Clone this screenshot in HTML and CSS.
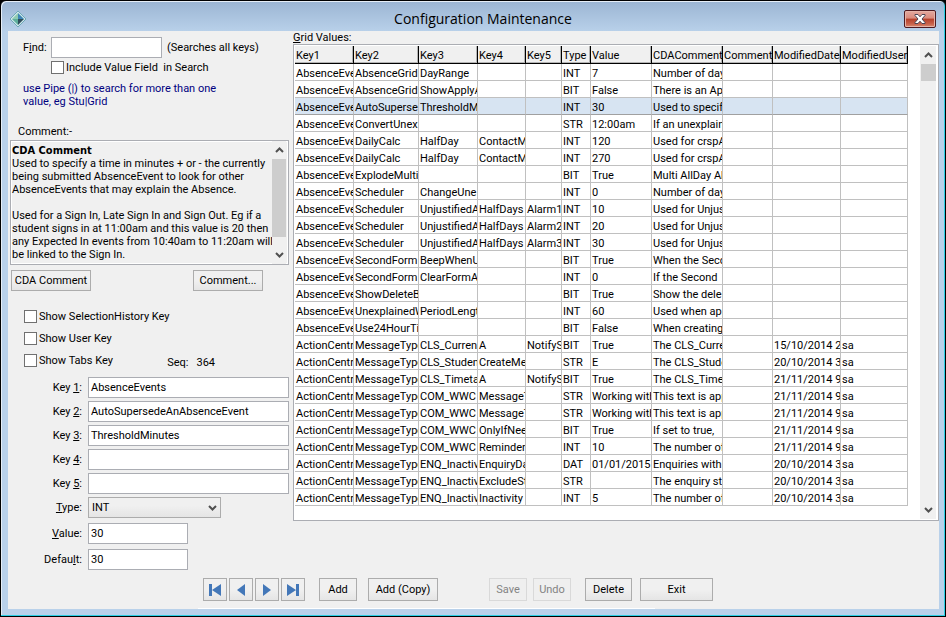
FILE: index.html
```html
<!DOCTYPE html>
<html lang="en">
<head>
<meta charset="utf-8">
<title>Configuration Maintenance</title>
<link rel="stylesheet" href="styles.css">
</head>
<body>
<div class="window">
  <header class="titlebar">
    <svg class="app-icon" width="18" height="18" viewBox="0 0 18 18" aria-hidden="true">
      <path d="M9 1 17 9 9 17 1 9Z" fill="#cfe6ea" stroke="#6fa9b8"/>
      <path d="M9 3 9 9 3 9Z" fill="#8fcbb0"/>
      <path d="M9 3 15 9 9 9Z" fill="#3f86b4"/>
      <path d="M3 9 9 9 9 15Z" fill="#5fae9c"/>
      <path d="M15 9 9 15 9 9Z" fill="#2f4f5c"/>
    </svg>
    <h1 class="title">Configuration Maintenance</h1>
    <button class="close" type="button" aria-label="Close">
      <svg width="12" height="10" viewBox="0 0 12 10" aria-hidden="true">
        <path d="M1 .5h3l2 2.3 2-2.3h3v1L8 5l3 3.500v1H8L6 7.200 4 9.500H1v-1L4 5 1 1.500Z" fill="#fff" stroke="#4a4656" stroke-width="1"/>
      </svg>
    </button>
  </header>

  <main class="client">
    <div class="columns">
      <form class="side">
        <div class="find">
          <label for="find">F<u>i</u>nd:</label>
          <input class="text" id="find" type="text">
          <span>(Searches all keys)</span>
        </div>
        <label class="check include"><input type="checkbox">Include Value Field&nbsp; in Search</label>
        <p class="hint">use Pipe (|) to search for more than one<br>value, eg Stu|Grid</p>
        <p class="comment-label">Comment:-</p>
        <div class="comment">
          <div class="comment-text"><b>CDA Comment</b>
Used to specify a time in minutes + or - the currently
being submitted AbsenceEvent to look for other
AbsenceEvents that may explain the Absence.

Used for a Sign In, Late Sign In and Sign Out. Eg if a
student signs in at 11:00am and this value is 20 then
any Expected In events from 10:40am to 11:20am will
be linked to the Sign In.</div>
          <div class="scroll comment-scroll">
            <svg class="arrow" width="9" height="6" viewBox="0 0 9 6"><path d="M1 5 4.500 1.500 8 5" /></svg>
            <div class="thumb"></div>
            <svg class="arrow" width="9" height="6" viewBox="0 0 9 6"><path d="M1 1 4.500 4.500 8 1" /></svg>
          </div>
        </div>
        <div class="comment-buttons">
          <button class="btn" type="button">CDA Comment</button>
          <button class="btn" type="button">Comment...</button>
        </div>
        <div class="options">
          <label class="check"><input type="checkbox">Show SelectionHistory Key</label>
          <label class="check"><input type="checkbox">Show User Key</label>
          <div class="tabs-line">
            <label class="check"><input type="checkbox">Show Tabs Key</label>
            <span class="seq"><span>Seq:</span><span>364</span></span>
          </div>
        </div>
        <div class="fields keys">
          <label for="k1">Key <u>1</u>:</label><input class="text" id="k1" type="text" value="AbsenceEvents">
          <label for="k2">Key <u>2</u>:</label><input class="text" id="k2" type="text" value="AutoSupersedeAnAbsenceEvent">
          <label for="k3">Key <u>3</u>:</label><input class="text" id="k3" type="text" value="ThresholdMinutes">
          <label for="k4">Key <u>4</u>:</label><input class="text" id="k4" type="text">
          <label for="k5">Key <u>5</u>:</label><input class="text" id="k5" type="text">
          <label for="type"><u>T</u>ype:</label>
          <div class="select">
            <select id="type"><option>INT</option><option>BIT</option><option>STR</option><option>DAT</option></select>
            <svg class="arrow" width="9" height="6" viewBox="0 0 9 6"><path d="M1 1 4.500 4.500 8 1" /></svg>
          </div>
        </div>
        <div class="fields values">
          <label for="value"><u>V</u>alue:</label><input class="text short" id="value" type="text" value="30">
          <label for="default">Defau<u>l</u>t:</label><input class="text short" id="default" type="text" value="30">
        </div>
      </form>

      <section class="grid-area">
        <h2 class="grid-label"><u>G</u>rid Values:</h2>
        <div class="grid-box">
          <table class="grid">
            <colgroup>
              <col class="w59"><col class="w65"><col class="w59"><col class="w48"><col class="w36"><col class="w29"><col class="w61"><col class="w71"><col class="w50"><col class="w68"><col class="w67">
            </colgroup>
            <thead>
              <tr><th>Key1</th><th>Key2</th><th>Key3</th><th>Key4</th><th>Key5</th><th>Type</th><th>Value</th><th>CDAComment</th><th>Comment</th><th>ModifiedDate</th><th>ModifiedUser</th></tr>
            </thead>
            <tbody id="rows"></tbody>
          </table>
          <div class="scroll">
            <svg class="arrow" width="9" height="6" viewBox="0 0 9 6"><path d="M1 5 4.500 1.500 8 5" /></svg>
            <div class="thumb"></div>
            <svg class="arrow" width="9" height="6" viewBox="0 0 9 6"><path d="M1 1 4.500 4.500 8 1" /></svg>
          </div>
        </div>
      </section>
    </div>

    <footer class="toolbar">
      <div class="nav">
        <button class="btn" type="button" aria-label="First"><svg width="14" height="12" viewBox="0 0 14 12"><path d="M1 0h3v12H1zM13 0v12L4 6z"/></svg></button>
        <button class="btn" type="button" aria-label="Previous"><svg width="14" height="12" viewBox="0 0 14 12"><path d="M11 0v12L3 6z"/></svg></button>
        <button class="btn" type="button" aria-label="Next"><svg width="14" height="12" viewBox="0 0 14 12"><path d="M3 0v12l8-6z"/></svg></button>
        <button class="btn" type="button" aria-label="Last"><svg width="14" height="12" viewBox="0 0 14 12"><path d="M10 0h3v12h-3zM1 0v12l9-6z"/></svg></button>
      </div>
      <button class="btn add" type="button">Add</button>
      <button class="btn copy" type="button">Add (Copy)</button>
      <button class="btn save" type="button" disabled>Save</button>
      <button class="btn undo" type="button" disabled>Undo</button>
      <button class="btn delete" type="button">Delete</button>
      <button class="btn exit" type="button">Exit</button>
    </footer>
  </main>
</div>
<script src="script.js"></script>
</body>
</html>
```
FILE: styles.css
```css
* { box-sizing: border-box; }

html, body { height: 100%; margin: 0; }

body, button, input, select {
  font-family: Roboto, "DejaVu Sans Condensed", sans-serif;
  font-size: 11px;
  line-height: 13px;
  color: #000;
}

body { background: #000; }

h1, h2, p { margin: 0; font-weight: normal; }

/* window frame */
.window {
  display: flex;
  flex-direction: column;
  min-height: 100vh;
  padding: 0 6px 7px;
  border: 1px solid #000;
  border-radius: 6px 6px 0 0;
  box-shadow: inset -1px -1px 0 #2ccfe4, inset 1px 1px 0 #e6eef7;
  background: linear-gradient(#9bb5d3, #b9d1ea 31px);
}

.titlebar {
  display: grid;
  grid-template-columns: 64px 1fr 44px;
  align-items: center;
  height: 30px;
  padding-top: 6px;
}

.app-icon { margin-left: 2px; }

.title {
  font-family: "Open Sans", "Noto Sans", sans-serif;
  font-size: 14px;
  line-height: 20px;
  text-align: center;
}

.close {
  display: grid;
  place-items: center;
  justify-self: end;
  width: 32px;
  height: 18px;
  margin-right: 3px;
  padding: 0;
  border: 1px solid #4e1a20;
  border-radius: 2px;
  background: linear-gradient(#e3a99f, #d98a7c 45%, #b5402b 50%, #c8614a 80%, #d88a70);
  box-shadow: inset 0 0 0 1px #e5b3a8;
}

.client {
  flex: 1;
  display: flex;
  flex-direction: column;
  margin-left: 1px;
  background: #f0f0f0;
}

.columns { display: flex; gap: 4px; }

/* left pane */
.side { width: 281px; flex: none; padding-left: 2px; }

.text {
  height: 21px;
  padding: 0 2px;
  border: 1px solid #abadb3;
  background: #fff;
}

.find {
  display: grid;
  grid-template-columns: 23px 111px 1fr;
  align-items: center;
  gap: 5px;
  padding: 6px 0 0 13px;
}

.check {
  display: flex;
  align-items: center;
  gap: 2px;
}
.check input {
  appearance: none;
  width: 13px;
  height: 13px;
  margin: 0;
  border: 1px solid #707070;
  background: #fff;
}
.include { margin: 3px 0 0 41px; }

.hint { margin: 8px 0 0 13px; color: #000080; }
.comment-label { margin: 17px 0 0 8px; }

.comment {
  display: flex;
  height: 125px;
  margin-top: 2px;
  border: 1px solid #abadb3;
  box-shadow: inset 0 0 0 1px #fff;
}
.comment-text {
  flex: 1;
  min-width: 0;
  padding: 3px 0 0 1px;
  overflow: hidden;
  white-space: pre;
}
.comment-text b { font-family: "DejaVu Sans Condensed", sans-serif; line-height: 1; }

.scroll {
  display: flex;
  flex-direction: column;
  align-items: center;
  width: 16px;
  background: #f0f0f0;
}
.arrow { fill: none; stroke: #505050; stroke-width: 2; }
.thumb { width: 15px; background: #cdcdcd; }
.scroll .arrow:first-child { margin: 6px 0; }
.scroll .arrow:last-child { margin: auto 0 6px; }
.comment-scroll { flex: none; width: 14px; margin-right: 2px; }
.comment-scroll .thumb { width: 14px; height: 78px; }

.btn {
  display: grid;
  place-items: center;
  height: 23px;
  padding: 0;
  border: 1px solid #acacac;
  background: linear-gradient(#f0f0f0 50%, #e5e5e5);
}
.btn:disabled { color: #838383; border-color: #d9d9d9; background: #efefef; }

.comment-buttons {
  display: flex;
  justify-content: space-between;
  padding: 5px 26px 0 1px;
}
.comment-buttons .btn { width: 70px; height: 21px; }
.comment-buttons .btn:first-child { width: 80px; }

.options {
  display: flex;
  flex-direction: column;
  gap: 9px;
  margin: 19px 0 0 14px;
}
.tabs-line { display: flex; }
.seq { display: flex; gap: 8px; margin: 2px 0 -2px auto; padding-right: 74px; }

.fields {
  display: grid;
  grid-template-columns: 72px 1fr;
  align-items: center;
  column-gap: 6px;
}
.fields label { text-align: right; }
.keys { margin-top: 10px; row-gap: 3px; }
.values { margin-top: 5px; row-gap: 5px; }
.short { width: 100px; }

.select { position: relative; width: 133px; }
.select select {
  display: block;
  width: 100%;
  height: 21px;
  padding: 0 3px;
  appearance: none;
  border: 1px solid #acacac;
  border-radius: 0;
  background: linear-gradient(#f0f0f0 40%, #e5e5e5);
}
.select .arrow { position: absolute; right: 4px; top: 8px; pointer-events: none; }

/* grid */
.grid-area {
  flex: 1;
  min-width: 0;
  display: flex;
  flex-direction: column;
}
.grid-label { font-size: 11px; line-height: 13px; }
.grid-box {
  flex: none;
  display: flex;
  align-items: stretch;
  justify-content: space-between;
  height: 477px;
  border: 1px solid #abadb3;
  background: #fff;
}
.grid-box .scroll { margin: 1px 2px 1px 0; }
.grid-box .thumb { height: 17px; }

.grid {
  align-self: flex-start;
  margin: 1px 0 0 1px;
  width: 613px;
  table-layout: fixed;
  border-spacing: 0;
}
.w59 { width: 59px; }
.w65 { width: 65px; }
.w48 { width: 48px; }
.w36 { width: 36px; }
.w29 { width: 29px; }
.w61 { width: 61px; }
.w71 { width: 71px; }
.w50 { width: 50px; }
.w68 { width: 68px; }
.w67 { width: 67px; }

.grid th, .grid td {
  height: 17px;
  padding: 2px 0 0 1px;
  overflow: hidden;
  font-weight: normal;
  line-height: 13px;
  text-align: left;
  white-space: nowrap;
  border-right: 1px solid #c0c0c0;
  border-bottom: 1px solid #c0c0c0;
}
.grid th {
  height: 18px;
  background: #f0f0f0;
  border-right-color: #000;
  border-bottom-color: #000;
  box-shadow: inset -1px -1px 0 #b4b4b4;
}
.selected td { background: #d7e4f2; border-bottom-color: #a0a0a0; }

/* bottom toolbar */
.toolbar {
  display: flex;
  margin: auto 0 0 190px;
  padding: 0 0 8px 5px;
  background: linear-gradient(#fff, #fff) 0 100% / 457px 1px no-repeat;
}
.nav { display: flex; gap: 2px; }
.nav .btn { width: 24px; }
.nav svg { fill: #4377b8; }
.add { width: 38px; margin-left: 14px; }
.copy { width: 70px; margin-left: 11px; }
.save { width: 38px; margin-left: 51px; }
.undo { width: 38px; margin-left: 6px; }
.delete { width: 47px; margin-left: 14px; }
.exit { width: 73px; margin-left: 8px; }
```
FILE: script.js
```js
// key1 | key2 | key3 | key4 | key5 | type | value | CDA comment | comment | modified date | modified user
const data = `AbsenceEve|AbsenceGrid|DayRange|||INT|7|Number of day|||
AbsenceEve|AbsenceGrid|ShowApplyA|||BIT|False|There is an Ap|||
AbsenceEve|AutoSuperse|ThresholdMi|||INT|30|Used to specif|||
AbsenceEve|ConvertUnex||||STR|12:00am|If an unexplain|||
AbsenceEve|DailyCalc|HalfDay|ContactM||INT|120|Used for crspA|||
AbsenceEve|DailyCalc|HalfDay|ContactM||INT|270|Used for crspA|||
AbsenceEve|ExplodeMultiA||||BIT|True|Multi AllDay Ab|||
AbsenceEve|Scheduler|ChangeUne|||INT|0|Number of day|||
AbsenceEve|Scheduler|UnjustifiedA|HalfDays|Alarm1|INT|10|Used for Unjus|||
AbsenceEve|Scheduler|UnjustifiedA|HalfDays|Alarm2|INT|20|Used for Unjus|||
AbsenceEve|Scheduler|UnjustifiedA|HalfDays|Alarm3|INT|30|Used for Unjus|||
AbsenceEve|SecondForm|BeepWhenU|||BIT|True|When the Seco|||
AbsenceEve|SecondForm|ClearFormA|||INT|0|If the Second|||
AbsenceEve|ShowDeleteB||||BIT|True|Show the dele|||
AbsenceEve|UnexplainedW|PeriodLengt|||INT|60|Used when app|||
AbsenceEve|Use24HourTim||||BIT|False|When creating|||
ActionCentr|MessageType|CLS_Curren|A|NotifyS|BIT|True|The CLS_Curre||15/10/2014 2|sa
ActionCentr|MessageType|CLS_Studen|CreateMe||STR|E|The CLS_Stude||20/10/2014 3|sa
ActionCentr|MessageType|CLS_Timetal|A|NotifyS|BIT|True|The CLS_Timet||21/11/2014 9|sa
ActionCentr|MessageType|COM_WWC|MessageT||STR|Working with|This text is app||21/11/2014 9|sa
ActionCentr|MessageType|COM_WWC|MessageT||STR|Working with|This text is app||21/11/2014 9|sa
ActionCentr|MessageType|COM_WWC|OnlyIfNee||BIT|True|If set to true,||21/11/2014 9|sa
ActionCentr|MessageType|COM_WWC|Reminder||INT|10|The number of||21/11/2014 9|sa
ActionCentr|MessageType|ENQ_Inactiv|EnquiryDa||DAT|01/01/2015|Enquiries with||20/10/2014 3|sa
ActionCentr|MessageType|ENQ_Inactiv|ExcludeSt||STR||The enquiry st||20/10/2014 3|sa
ActionCentr|MessageType|ENQ_Inactiv|Inactivity||INT|5|The number of||20/10/2014 3|sa`;

const body = document.getElementById("rows");
data.split("\n").forEach((line, i) => {
  const row = body.insertRow();
  if (i === 2) row.className = "selected";
  line.split("|").forEach((value) => {
    row.insertCell().textContent = value;
  });
});
```
